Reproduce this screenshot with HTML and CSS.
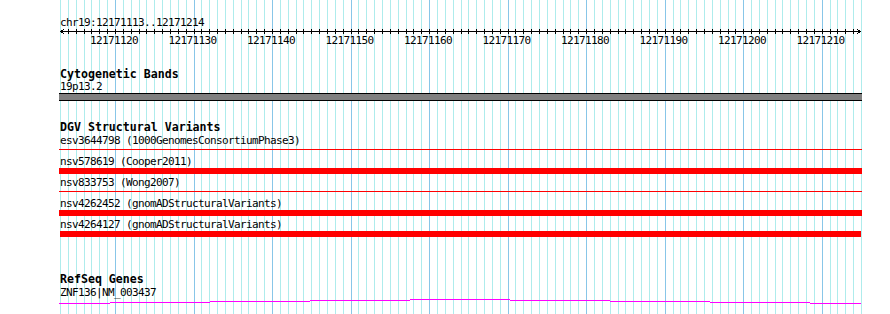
FILE: index.html
```html
<!DOCTYPE html>
<html lang="en">
<head>
  <meta charset="UTF-8">
  <meta name="viewport" content="width=device-width, initial-scale=1.0">
  <title>chr19:12171113..12171214</title>
  <link rel="stylesheet" href="styles.css">
</head>
<body>
  <div class="panel">
    <svg class="grid" id="grid" width="890" height="314"></svg>

    <div class="content">
      <div class="ruler">
        <div class="small">chr19:12171113..12171214</div>
        <svg class="scale" id="scale" width="802" height="7">
          <rect x="0" y="3" width="801" height="1" fill="#000"/>
          <path d="M0.5 3.5 L4 1.5 M0.5 3.5 L4 5.5 M800.5 3.5 L797 1.5 M800.5 3.5 L797 5.5" stroke="#000" stroke-width="1" fill="none"/>
        </svg>
        <div class="ticks small">
          <span>12171120</span>
          <span>12171130</span>
          <span>12171140</span>
          <span>12171150</span>
          <span>12171160</span>
          <span>12171170</span>
          <span>12171180</span>
          <span>12171190</span>
          <span>12171200</span>
          <span>12171210</span>
        </div>
      </div>

      <section class="track cyto">
        <h3 class="track-title">Cytogenetic Bands</h3>
        <div class="small">19p13.2</div>
        <div class="band"></div>
      </section>

      <section class="track dgv">
        <h3 class="track-title">DGV Structural Variants</h3>
        <div class="small">esv3644798 (1000GenomesConsortiumPhase3)</div>
        <div class="sv thin"></div>
        <div class="small">nsv578619 (Cooper2011)</div>
        <div class="sv"></div>
        <div class="small">nsv833753 (Wong2007)</div>
        <div class="sv thin"></div>
        <div class="small">nsv4262452 (gnomADStructuralVariants)</div>
        <div class="sv"></div>
        <div class="small">nsv4264127 (gnomADStructuralVariants)</div>
        <div class="sv inside"></div>
      </section>

      <section class="track refseq">
        <h3 class="track-title">RefSeq Genes</h3>
        <div class="small">ZNF136|NM_003437</div>
        <svg class="gene" width="803" height="6">
          <g fill="#ff00ff">
            <rect x="0" y="5" width="51" height="1"/>
            <rect x="51" y="4" width="100" height="1"/>
            <rect x="151" y="3" width="100" height="1"/>
            <rect x="251" y="2" width="100" height="1"/>
            <rect x="351" y="1" width="100" height="1"/>
            <rect x="451" y="2" width="100" height="1"/>
            <rect x="551" y="3" width="100" height="1"/>
            <rect x="651" y="4" width="100" height="1"/>
            <rect x="751" y="5" width="51" height="1"/>
          </g>
        </svg>
      </section>
    </div>
  </div>

  <script>
    // one grid line per base, darker every 10 bp
    const bases = 102;
    const step = 801 / bases;
    const ns = "http://www.w3.org/2000/svg";
    const grid = document.getElementById("grid");
    const scale = document.getElementById("scale");

    for (let i = 0; i <= bases; i++) {
      const x = Math.round(60 + i * step);

      const line = document.createElementNS(ns, "rect");
      line.setAttribute("x", x);
      line.setAttribute("y", 0);
      line.setAttribute("width", 1);
      line.setAttribute("height", 314);
      line.setAttribute("fill", i % 10 === 7 ? "#88c6e8" : "#aeecec");
      grid.appendChild(line);

      if (i > 0 && i < bases) {
        const tick = document.createElementNS(ns, "rect");
        tick.setAttribute("x", x - 60);
        tick.setAttribute("y", 1);
        tick.setAttribute("width", 1);
        tick.setAttribute("height", 5);
        tick.setAttribute("fill", "#000");
        scale.appendChild(tick);
      }
    }
  </script>
</body>
</html>
```

FILE: styles.css
```css
body {
  margin: 0;
  background: #fff;
  color: #000;
  font-family: "DejaVu Sans Mono", "Liberation Mono", monospace;
}

.panel {
  position: relative;
  width: 890px;
  height: 314px;
  overflow: hidden;
}

.grid {
  position: absolute;
  top: 0;
  left: 0;
  shape-rendering: crispEdges;
}

.content {
  position: relative;
  width: 802px;
  padding-left: 60px;
}

.small {
  font-size: 11px;
  letter-spacing: -0.62px;
  line-height: 11px;
  height: 11px;
  white-space: nowrap;
}

.ruler {
  padding-top: 17px;
}

.scale {
  display: block;
  shape-rendering: crispEdges;
}

.ticks {
  display: flex;
  padding-left: 14.7px;
}

.ticks span {
  flex: 0 0 78.53px;
  text-align: center;
}

.track-title {
  margin: 0;
  font-size: 11.6px;
  font-weight: bold;
  line-height: 14px;
  height: 15px;
}

.cyto {
  margin-top: 21px;
}

.cyto .track-title {
  height: 14px;
}

.band {
  width: 803px;
  height: 6px;
  margin: 1px 0 0 -1px;
  background: #808080;
  border-top: 1px solid #000;
  border-bottom: 1px solid #000;
}

.dgv {
  margin-top: 19px;
  padding-bottom: 3px;
}

.sv {
  width: 803px;
  height: 6px;
  margin: 1px 0 3px -1px;
  background: #ff0000;
}

.sv.thin {
  height: 1px;
  margin-top: 3px;
  margin-bottom: 6px;
}

.sv.inside {
  width: 801px;
  margin: 1px 0 0;
}

.refseq {
  margin-top: 32px;
}

.gene {
  display: block;
  margin-left: -1px;
  shape-rendering: crispEdges;
}
```
